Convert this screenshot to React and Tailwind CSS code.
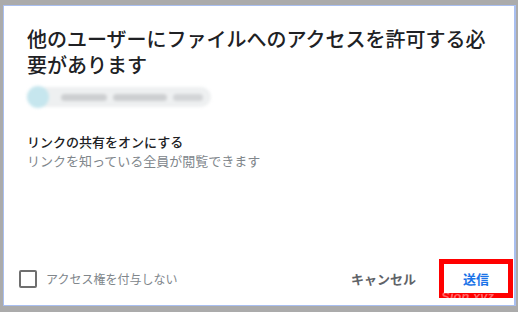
import React from 'react';

const font = { fontFamily: '"Noto Sans CJK JP", "Noto Sans", sans-serif' };

// blurred account chip (email is masked in the source)
const AccountChip = () => (
  <div className="mt-[9px] flex h-[20px] w-[184px] items-center rounded-full bg-[#eef0f1] blur-[1.5px]">
    <div className="h-[22px] w-[22px] rounded-full bg-[#c6e6ee]" />
    <div className="ml-[12px] flex gap-[6px]">
      <div className="h-[7px] w-[46px] rounded-full bg-[#cdcfd1]" />
      <div className="h-[7px] w-[54px] rounded-full bg-[#cdcfd1]" />
      <div className="h-[7px] w-[30px] rounded-full bg-[#d3d5d7]" />
    </div>
  </div>
);

export default function App() {
  return (
    <div className="relative h-[312px] w-[518px] overflow-hidden bg-[#ababab] pl-[3px] pt-[5px]" style={font}>
      <div className="flex h-[301px] w-[513px] flex-col border border-r-2 border-[#a9bff0] bg-white">
        {/* header */}
        <div className="pl-[23px] pr-[10px] pt-[20px]">
          <h1 className="text-[20px] font-medium leading-[26px] text-[#202124]">
            他のユーザーにファイルへのアクセスを許可する必要があります
          </h1>
          <AccountChip />
        </div>

        {/* link sharing */}
        <div className="px-[23px] pt-[25px]">
          <p className="text-[13px] font-medium leading-[19px] text-[#202124]">リンクの共有をオンにする</p>
          <p className="text-[13px] leading-[19px] text-[#80868b]">リンクを知っている全員が閲覧できます</p>
        </div>

        {/* footer */}
        <div className="mb-[7px] mt-auto flex h-[39px] items-center pl-[15px] pr-[1px]">
          <div className="h-[18px] w-[18px] rounded-[2px] border-2 border-[#6f6f6f]" />
          <span className="ml-[9px] text-[12px] text-[#80868b]">アクセス権を付与しない</span>
          <button className="ml-auto mr-[23px] text-[13px] font-bold text-[#5f6368]">キャンセル</button>
          <div className="flex h-[39px] w-[74px] items-center justify-center border-[5px] border-[#ff0000]">
            <span className="text-[13px] font-bold text-[#1a73e8]">送信</span>
          </div>
        </div>
      </div>

      {/* watermark */}
      <span className="absolute left-[441px] top-[287px] text-[13px] font-bold italic text-white opacity-40" style={{ fontFamily: '"Liberation Sans", sans-serif' }}>
        Sion.xyz
      </span>
    </div>
  );
}
